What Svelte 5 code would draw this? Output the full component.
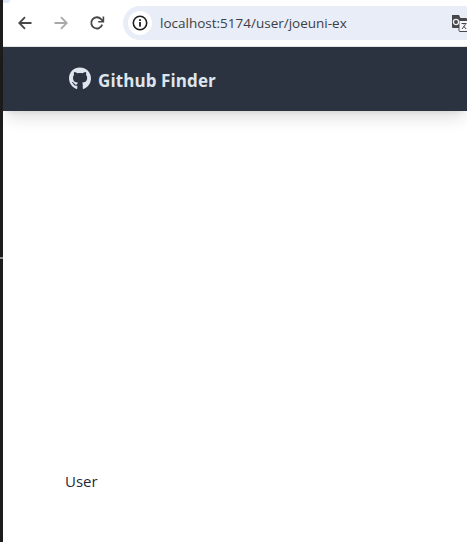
<script>
  const title = 'Github Finder'
  const url = 'localhost:5174/user/joeuni-ex'
</script>

<div class="window">
  <div class="edge">
    <span class="edge-mark"></span>
  </div>

  <div class="page">
    <header class="toolbar">
      <button class="tool" aria-label="Back">
        <svg width="16" height="16" viewBox="0 0 16 16" fill="none" stroke="#474747" stroke-width="1.8">
          <path d="M14.5 8H2.5M8 2.2 2.3 8 8 13.8"/>
        </svg>
      </button>
      <button class="tool" aria-label="Forward">
        <svg width="16" height="16" viewBox="0 0 16 16" fill="none" stroke="#a9a9a9" stroke-width="1.8">
          <path d="M1.5 8h12M8 2.2 13.7 8 8 13.8"/>
        </svg>
      </button>
      <button class="tool" aria-label="Reload">
        <svg width="16" height="16" viewBox="0 0 16 16" fill="none" stroke="#474747" stroke-width="1.8">
          <path d="M13.2 9.6A5.6 5.6 0 1 1 12.1 4.2L14 6"/>
          <path d="M14.4 1.6v5.2H9.2" stroke-width="1.6"/>
        </svg>
      </button>

      <div class="address">
        <span class="info">
          <svg width="16" height="16" viewBox="0 0 16 16" fill="none">
            <circle cx="8" cy="8" r="6.7" stroke="#1f1f1f" stroke-width="1.6"/>
            <rect x="7.1" y="7" width="1.8" height="4.6" fill="#1f1f1f"/>
            <rect x="7.1" y="4.2" width="1.8" height="1.8" fill="#1f1f1f"/>
          </svg>
        </span>
        <span class="url">{url}</span>
        <svg class="translate" width="18" height="18" viewBox="0 0 18 18">
          <path d="M1 1h7l1.4 3H15a1 1 0 0 1 1 1v11a1 1 0 0 1-1 1H9l-1-3H2a1 1 0 0 1-1-1z" fill="#474747"/>
          <rect x="8" y="6.5" width="9.4" height="11" rx="1" fill="#f4f5fa" stroke="#474747"/>
          <circle cx="5" cy="8" r="2.6" fill="none" stroke="#eceff7" stroke-width="1.3"/>
          <path d="M10.5 9.5h5M13 9v1.5M11 15l3.6-4.6M12.4 12l2.8 3" fill="none" stroke="#474747"/>
        </svg>
      </div>
    </header>

    <nav class="navbar">
      <svg class="logo" width="22" height="23" viewBox="0 0 496 512" fill="currentColor">
        <path d="M165.9 397.4c0 2-2.3 3.6-5.2 3.6-3.3 0-5.6-1.6-5.6-3.6 0-2 2.3-3.6 5.2-3.6 3-.3 5.6 1.3 5.6 3.6zm-31.1-4.5c-.7 2 1.3 4.3 4.3 4.9 2.6 1 5.6 0 6.2-2s-1.3-4.3-4.3-5.2c-2.6-.7-5.5.3-6.2 2.3zm44.2-1.7c-2.9.7-4.9 2.6-4.6 4.9.3 2 2.9 3.3 5.9 2.6 2.9-.7 4.9-2.6 4.6-4.6-.3-1.9-3-3.2-5.9-2.9zM244.8 8C106.1 8 0 113.3 0 252c0 110.9 69.8 205.8 169.5 239.2 12.8 2.3 17.3-5.6 17.3-12.1 0-6.2-.3-40.4-.3-61.4 0 0-70 15-84.7-29.8 0 0-11.4-29.1-27.8-36.6 0 0-22.9-15.7 1.6-15.4 0 0 24.9 2 38.6 25.8 21.9 38.6 58.6 27.5 72.9 20.9 2.3-16 8.8-27.1 16-33.7-55.9-6.2-112.3-14.3-112.3-110.5 0-27.5 7.6-41.3 23.6-58.9-2.6-6.5-11.1-33.3 2.6-67.9 20.9-6.5 69 27 69 27 20-5.6 41.5-8.5 62.8-8.5s42.8 2.9 62.8 8.5c0 0 48.1-33.6 69-27 13.7 34.7 5.2 61.4 2.6 67.9 16 17.7 25.8 31.5 25.8 58.9 0 96.5-58.9 104.2-114.8 110.5 9.2 7.9 17 22.9 17 46.4 0 33.7-.3 75.4-.3 83.6 0 6.5 4.6 14.4 17.3 12.1C428.2 457.8 496 362.9 496 252 496 113.3 383.5 8 244.8 8zM97.2 352.9c-1.3 1-1 3.3.7 5.2 1.6 1.6 3.9 2.3 5.2 1 1.3-1 1-3.3-.7-5.2-1.6-1.6-3.9-2.3-5.2-1zm-10.8-8.1c-.7 1.3.3 2.9 2.3 3.9 1.6 1 3.6.7 4.3-.7.7-1.3-.3-2.9-2.3-3.9-2-.6-3.6-.3-4.3.7zm32.4 35.6c-1.6 1.3-1 4.3 1.3 6.2 2.3 2.3 5.2 2.6 6.5 1 1.3-1.3.7-4.3-1.3-6.2-2.2-2.3-5.2-2.6-6.5-1zm-11.4-14.7c-1.6 1-1.6 3.6 0 5.9 1.6 2.3 4.3 3.3 5.6 2.3 1.6-1.3 1.6-3.9 0-6.2-1.4-2.3-4-3.3-5.6-2z"/>
      </svg>
      <span class="brand">{title}</span>
    </nav>

    <main class="content">
      <p>User</p>
    </main>
  </div>
</div>

<style>
  :global(body) {
    margin: 0;
    background: #fff;
    overflow: hidden;
  }

  .window {
    display: flex;
    height: 542px;
    overflow: hidden;
    font-family: "Open Sans", "Noto Sans", sans-serif;
  }

  .edge {
    width: 3px;
    flex-shrink: 0;
    background: #1c1c1c;
    display: flex;
    align-items: flex-start;
    padding-top: 257px;
    box-sizing: border-box;
  }

  .edge-mark {
    width: 3px;
    height: 2px;
    background: #8a8a8a;
  }

  .page {
    flex: 1;
    min-width: 0;
    display: flex;
    flex-direction: column;
  }

  .toolbar {
    position: relative;
    height: 46px;
    flex-shrink: 0;
    display: flex;
    align-items: center;
    gap: 4px;
    padding: 0 0 0 6px;
    background: #fff;
    border-bottom: 1px solid #e3e3e3;
  }

  /* bit of the tab strip showing in the corner */
  .toolbar::before {
    content: '';
    position: absolute;
    left: 0;
    top: 0;
    width: 7px;
    height: 3px;
    background: #dfe8f8;
    border-bottom-right-radius: 3px;
  }

  .tool {
    width: 32px;
    height: 32px;
    padding: 0;
    border: none;
    background: none;
    display: flex;
    align-items: center;
    justify-content: center;
  }

  .address {
    flex: 1;
    min-width: 0;
    height: 34px;
    margin-left: 6px;
    margin-right: -14px;
    padding-left: 5px;
    display: flex;
    align-items: center;
    background: #e9edf8;
    border-radius: 17px;
  }

  .info {
    width: 24px;
    height: 24px;
    flex-shrink: 0;
    border-radius: 50%;
    background: #fff;
    display: flex;
    align-items: center;
    justify-content: center;
  }

  .url {
    margin-left: 8px;
    font-size: 13.5px;
    color: #3c4043;
  }

  .translate {
    margin-left: auto;
    margin-right: 12px;
  }

  .navbar {
    height: 64px;
    flex-shrink: 0;
    display: flex;
    align-items: center;
    gap: 7px;
    padding-left: 66px;
    background: #2b3340;
    color: #dfe5ee;
    box-shadow: 0 10px 15px -3px rgba(0, 0, 0, 0.12), 0 4px 6px -4px rgba(0, 0, 0, 0.1);
  }

  .logo {
    margin-bottom: 2px;
  }

  .brand {
    padding-top: 2px;
    font-size: 17px;
    font-weight: 700;
    letter-spacing: 0.1px;
  }

  .content {
    flex: 1;
    padding: 358px 0 0 62px;
  }

  .content p {
    margin: 0;
    font-size: 15px;
    line-height: 24px;
    color: #1f2937;
  }
</style>
